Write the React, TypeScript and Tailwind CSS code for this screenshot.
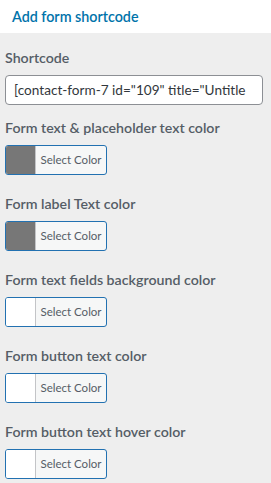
import React from "react";

const items: { label: string; color: string }[] = [
  { label: "Form text & placeholder text color", color: "#777777" },
  { label: "Form label Text color", color: "#777777" },
  { label: "Form text fields background color", color: "#ffffff" },
  { label: "Form button text color", color: "#ffffff" },
  { label: "Form button text hover color", color: "#ffffff" },
];

function ColorButton({ color }: { color: string }) {
  return (
    <div className="flex h-[30px] w-[102px] overflow-hidden rounded-[3px] border border-[#2271b1] bg-[#f6f7f7]">
      <div className="w-[30px] border-r border-[#c3c4c7]" style={{ backgroundColor: color }} />
      <div className="flex flex-1 items-center justify-center text-[11.5px] text-[#555d66]">Select Color</div>
    </div>
  );
}

export default function App() {
  return (
    <div className="flex h-[483px] w-[271px] flex-col bg-[#eeeeee] font-['Lato',sans-serif]">
      <div className="flex h-[33px] shrink-0 items-center bg-white px-[12px] text-[14.3px] font-semibold text-[#0073aa]">
        Add form shortcode
      </div>
      <div className="flex flex-col px-[5px] pt-[13px]">
        <div className="h-[24px] text-[14.2px] font-semibold leading-[24px] text-[#555d66]">Shortcode</div>
        <div className="mt-[5px] flex h-[30px] w-[258px] items-center overflow-hidden whitespace-nowrap rounded-[4px] border border-[#8c8f94] bg-white pl-[8px] text-[13.6px] text-[#32373c]">
          [contact-form-7 id="109" title="Untitle
        </div>
        <div className="mt-[11px] flex flex-col gap-[17px]">
          {items.map((it) => (
            <div key={it.label} className="flex flex-col gap-[5px]">
              <div className="h-[24px] text-[14.2px] font-semibold leading-[24px] text-[#555d66]">{it.label}</div>
              <ColorButton color={it.color} />
            </div>
          ))}
        </div>
      </div>
    </div>
  );
}
